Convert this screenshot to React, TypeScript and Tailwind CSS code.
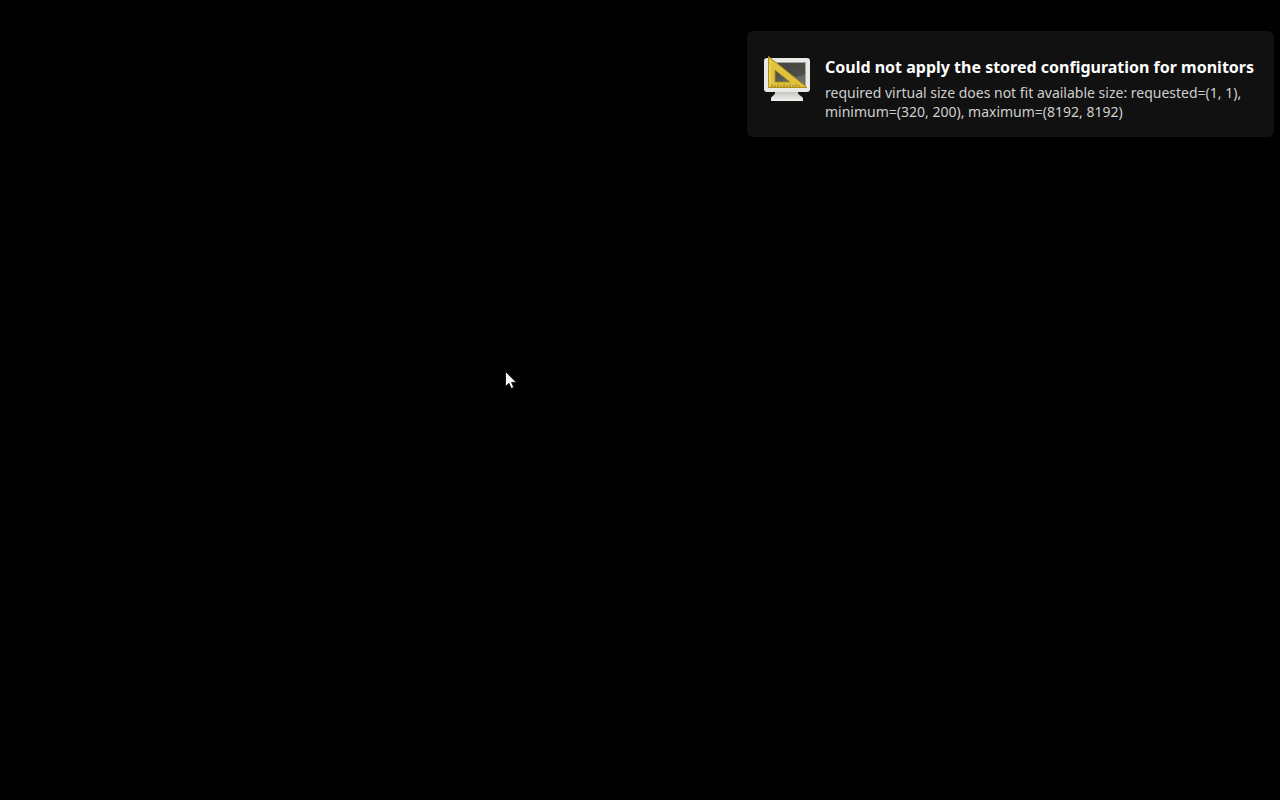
import React from 'react';

const DisplayIcon: React.FC = () => {
  return (
    <svg className="size-12 shrink-0" viewBox="0 1 48 48" fill="none" aria-hidden="true">
      <defs>
        <linearGradient id="screen" x1="0" y1="0" x2="1" y2="1">
          <stop offset="0" stopColor="#3c3d3a" />
          <stop offset="1" stopColor="#777874" />
        </linearGradient>
        <linearGradient id="stand" x1="0" y1="0" x2="0" y2="1">
          <stop offset="0" stopColor="#bdbdb9" />
          <stop offset="1" stopColor="#f1f1ee" />
        </linearGradient>
      </defs>
      <path d="M12 36h23v3c0 2 4 3 5 5v3H8v-3c1-2 4-3 4-5z" fill="url(#stand)" />
      <rect x="1" y="4" width="46" height="34" rx="3" fill="#e9e9e6" />
      <rect x="5.500" y="8.500" width="37" height="25" fill="url(#screen)" stroke="#a4a5a0" />
      <path d="M20 9h22v11c-7 4-14 2-22 3z" fill="#44453f" opacity=".7" />
      <path
        d="M5.500 2.500L44 33.500H5.500zM12 16v12h15z"
        fill="#e0c23f"
        fillRule="evenodd"
        stroke="#b08e13"
      />
      <path d="M7 6v26" stroke="#f0dc6c" />
      <path d="M9 33v-3m3 3v-2m3 2v-3m3 3v-2m3 2v-3m3 3v-2m3 2v-3m3 3v-2m3 2v-3m3 3v-2" stroke="#9a7d18" />
    </svg>
  );
};

const App: React.FC = () => {
  return (
    <div className="relative min-h-screen bg-black font-['Noto_Sans',sans-serif]">
      <div className="flex justify-end pt-[31px] pr-1.5 pl-4">
        <div role="alert" className="flex w-[527px] gap-3.5 rounded-md bg-[#111111] pt-6 pr-4 pb-4 pl-4">
          <DisplayIcon />
          <div className="min-w-0 flex-1">
            <h1 className="text-base leading-6 font-bold text-white">
              Could not apply the stored configuration for monitors
            </h1>
            <p className="mt-1 text-sm leading-[19px] text-[#cfcfcf]">
              required virtual size does not fit available size: requested=(1, 1), minimum=(320, 200), maximum=(8192, 8192)
            </p>
          </div>
        </div>
      </div>

      {/* Mouse pointer */}
      <svg className="absolute top-[371px] left-[505px] h-5 w-3" viewBox="0 0 12 20" aria-hidden="true">
        <path d="M.5 .5v15l3.500-3.200 2.200 5.200 2.600-1.100-2.200-5h4.700z" fill="#f8f8f8" stroke="#1c1c1c" />
      </svg>
    </div>
  );
};

export default App;
